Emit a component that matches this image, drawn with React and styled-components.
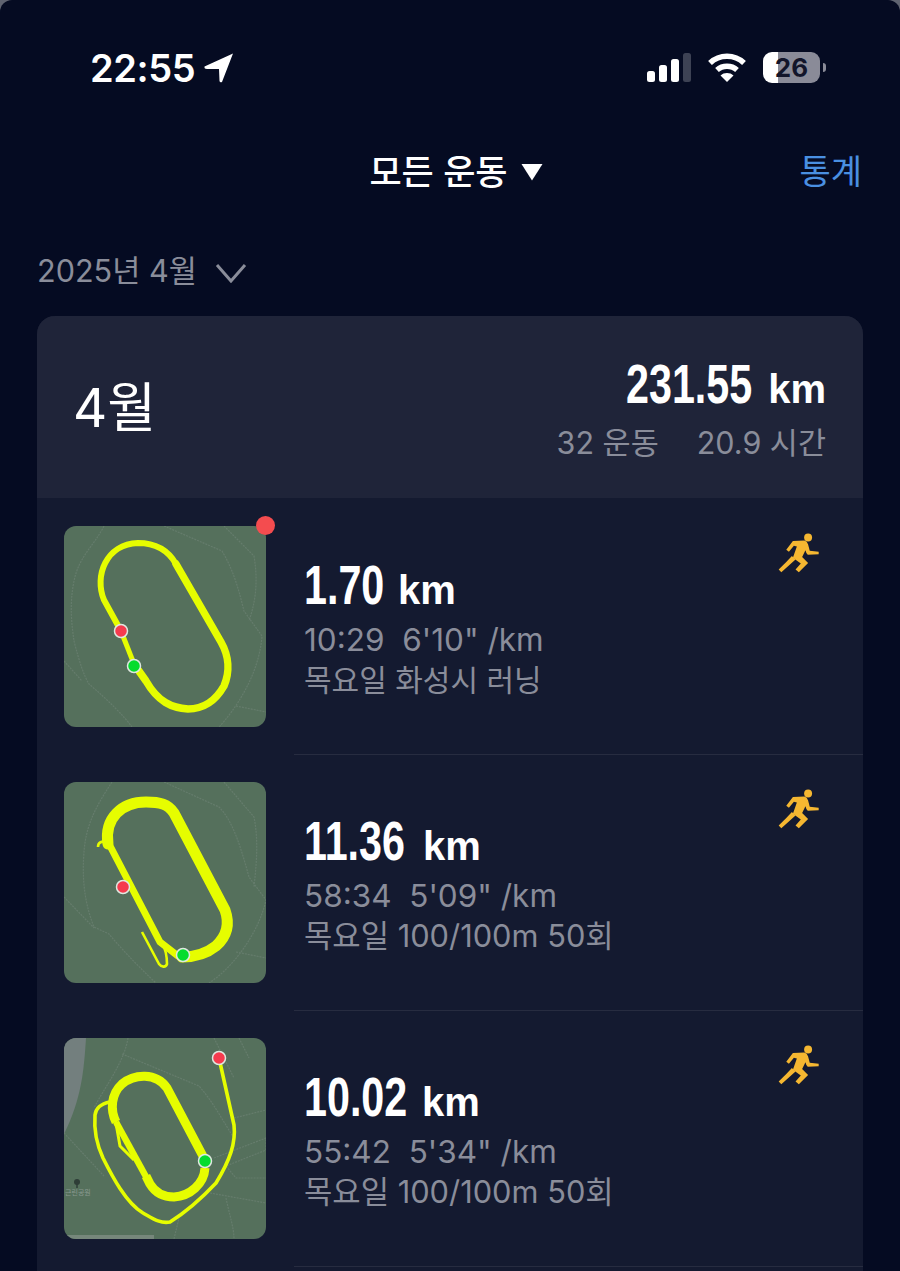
import React from 'react';
import styled, { createGlobalStyle } from 'styled-components';

const GlobalStyle = createGlobalStyle`
  html, body {
    margin: 0;
    padding: 0;
    background: #5f6370;
  }
`;

const KR = `Inter, "Noto Sans CJK KR", "Noto Sans", sans-serif`;
const GREY = '#8a8d9a';

const Page = styled.div`
  width: 900px;
  height: 1271px;
  overflow: hidden;
  background: #050b22;
  border-radius: 12px 12px 0 0;
  display: flex;
  flex-direction: column;
  font-family: ${KR};
`;

const StatusBar = styled.div`
  height: 136px;
  box-sizing: border-box;
  padding: 48px 76px 0 90px;
  display: flex;
  justify-content: space-between;
  align-items: flex-start;
`;

const Clock = styled.div`
  display: flex;
  align-items: center;
  gap: 9px;
  color: #fff;
  font: 600 38px/40px Inter, sans-serif;
  letter-spacing: -0.4px;
`;

const StatusIcons = styled.div`
  display: flex;
  align-items: center;
  gap: 17px;
  height: 38px;
`;

const Battery = styled.div`
  position: relative;
  width: 57px;
  height: 31px;
  border-radius: 9px;
  background: linear-gradient(90deg, #fff 0 26%, #8a8b98 26% 100%);
  color: #12152a;
  font: 700 26px/31px Inter, sans-serif;
  text-align: center;
  margin-right: 4px;
  &::after {
    content: '';
    position: absolute;
    right: -6px;
    top: 11px;
    width: 3px;
    height: 9px;
    border-radius: 0 3px 3px 0;
    background: #8a8b98;
  }
`;

const NavBar = styled.div`
  height: 72px;
  position: relative;
  display: flex;
  justify-content: center;
  align-items: center;
  padding-left: 12px;
`;

const NavTitle = styled.div`
  display: flex;
  align-items: center;
  gap: 13px;
  color: #fff;
  font-size: 35px;
  font-weight: 500;
  line-height: 44px;
`;

const StatsLink = styled.a`
  position: absolute;
  right: 38px;
  top: 14px;
  color: #4a90e2;
  font-size: 34px;
  line-height: 44px;
`;

const MonthPicker = styled.div`
  height: 108px;
  box-sizing: border-box;
  padding: 41px 0 0 37px;
  display: flex;
  align-items: flex-start;
  gap: 18px;
  color: ${GREY};
  font-size: 30.6px;
  line-height: 44px;
`;

const Card = styled.div`
  flex: 1;
  margin: 0 37px;
  border-radius: 18px 18px 0 0;
  overflow: hidden;
  background: #141a30;
`;

const CardHeader = styled.div`
  height: 182px;
  box-sizing: border-box;
  padding: 36px 37px 0 36px;
  background: #1f2439;
  display: flex;
  justify-content: space-between;
`;

const MonthName = styled.div`
  color: #fff;
  font-size: 53px;
  line-height: 112px;
`;

const Summary = styled.div`
  display: flex;
  flex-direction: column;
  align-items: flex-end;
  padding-top: 5px;
`;

const Distance = styled.div`
  color: #fff;
  font-family: "Liberation Sans", sans-serif;
  font-weight: 700;
  line-height: 54px;
  display: flex;
  align-items: baseline;
  gap: 15px;
`;

/* no condensed face is installed, so the digits are squeezed to the measured width */
const Figure = styled.span`
  display: inline-block;
  width: ${p => p.$width}px;
  font-size: 55px;
  white-space: nowrap;
  transform: scaleX(0.75);
  transform-origin: left center;
`;

const Unit = styled.span`
  font-size: 40px;
`;

const Totals = styled.div`
  display: flex;
  gap: 38px;
  color: ${GREY};
  font-size: 30.5px;
  line-height: 44px;
  margin-top: 5px;
`;

const Row = styled.div`
  height: 256px;
  position: relative;
  box-sizing: border-box;
  padding: 28px 42px 0 27px;
  display: flex;
  align-items: flex-start;
  &::after {
    content: '';
    position: absolute;
    left: 257px;
    right: 0;
    bottom: -1px;
    height: 1px;
    background: #272c40;
  }
`;

const Thumb = styled.div`
  position: relative;
  width: 202px;
  height: 201px;
  flex: none;
  border-radius: 12px;
  background: #55705c;
  svg {
    display: block;
    border-radius: 12px;
  }
`;

const NewBadge = styled.span`
  position: absolute;
  top: -10px;
  right: -9px;
  width: 19px;
  height: 19px;
  border-radius: 50%;
  background: #f44c4f;
`;

const Info = styled.div`
  flex: 1;
  margin-left: 38px;
  padding-top: 32px;
`;

const Pace = styled.div`
  color: ${GREY};
  font-size: 31.5px;
  line-height: 40px;
  margin-top: 3px;
  white-space: pre;
`;

const Label = styled.div`
  color: ${GREY};
  font-size: ${p => p.$size}px;
  line-height: 40px;
  white-space: pre;
`;

const RunBox = styled.div`
  padding-top: 7px;
`;

const MapLabel = styled.text`
  font-family: "Noto Sans CJK KR", sans-serif;
  font-size: 7px;
  fill: #8a9a90;
`;

function LocationArrow() {
  return (
    <svg width="30" height="30" viewBox="0 0 30 30">
      <path d="M29 0.5 L0.5 13.5 Q0 16 3 16 L15 16 L15.5 28 Q16 30 18 29 Z" fill="#fff" />
    </svg>
  );
}

function Signal() {
  return (
    <svg width="44" height="29" viewBox="0 0 44 29">
      <rect x="0" y="18" width="8" height="11" rx="2.5" fill="#fff" />
      <rect x="12" y="12" width="8" height="17" rx="2.5" fill="#fff" />
      <rect x="24" y="6" width="8" height="23" rx="2.5" fill="#fff" />
      <rect x="36" y="0" width="8" height="29" rx="2.5" fill="#3d4254" />
    </svg>
  );
}

function Wifi() {
  return (
    <svg width="38" height="29" viewBox="0 0 38 29" fill="none" stroke="#fff" strokeWidth="5.5">
      <path d="M2 10 C11.5 1 26.5 1 36 10" />
      <path d="M9 17 C14.5 12 23.5 12 29 17" />
      <path d="M19 29 L12.5 22.5 C16 19.2 22 19.2 25.5 22.5 Z" fill="#fff" stroke="none" />
    </svg>
  );
}

function Caret() {
  return (
    <svg width="22" height="18" viewBox="0 0 22 18">
      <path d="M0.5 1 L21.5 1 L11 17.5 Z" fill="#fff" />
    </svg>
  );
}

function Chevron() {
  return (
    <svg width="32" height="20" viewBox="0 0 32 20" fill="none" stroke={GREY} strokeWidth="3" style={{ marginTop: 14 }}>
      <path d="M2 2 L16 18 L30 2" />
    </svg>
  );
}

function Runner() {
  return (
    <svg width="43" height="40" viewBox="55 38 130 120" fill="#f5b731">
      <circle cx="146" cy="51" r="12" />
      <path d="M80 88 L100 62 L135 60 Q143 62 146 72 L151 91 L178 94 L178 102 L145 103 Q140 100 138 90 L128 110 L146 128 L118 156 L108 148 L124 130 L100 112 L112 78 L103 76 L88 94 Z" />
      <path d="M97 107 L108 118 L92 132 L65 156 L57 148 L80 125 Z" />
    </svg>
  );
}

const Roads = ({ d }) => (
  <path d={d} fill="none" stroke="#72877a" strokeWidth="1.2" strokeDasharray="2 1" opacity="0.55" />
);

const Marker = ({ x, y, color }) => (
  <circle cx={x} cy={y} r="6.5" fill={color} stroke="#dfe8e0" strokeWidth="1.5" />
);

const ROUTE = '#e6fd00';

function MapOne() {
  return (
    <svg width="202" height="201" viewBox="0 0 202 201" fill="none">
      <Roads d="M40 0 C30 20 15 30 10 55 C5 80 8 100 10 115 C15 135 20 150 25 158 C45 175 60 190 68 201 M0 135 L18 155 M100 0 L158 25 C170 45 175 65 180 85 L198 110 C195 150 170 185 155 201 M160 0 L190 30 C195 60 190 80 185 95 M172 180 L202 186" />
      <path d="M57 105 L40 74 C30 50 42 18 74 17 C92 17 104 24 112 38" stroke={ROUTE} strokeWidth="6" strokeLinecap="round" />
      <path d="M112 38 L157 116 C165 130 166 146 160 160 C152 174 140 183 124 183 C108 182 94 176 82 155 L70 138" stroke={ROUTE} strokeWidth="7.5" strokeLinecap="round" strokeLinejoin="round" />
      <path d="M70 138 L57 105" stroke={ROUTE} strokeWidth="5" />
      <Marker x={57} y={105} color="#f53b4e" />
      <Marker x={70} y={140} color="#05dc2e" />
    </svg>
  );
}

function MapTwo() {
  return (
    <svg width="202" height="201" viewBox="0 0 202 201" fill="none">
      <Roads d="M48 0 C35 20 22 40 20 70 C18 95 20 120 30 145 L45 152 C60 170 80 190 92 201 M0 115 L30 146 M100 0 L155 25 C170 40 178 70 185 95 L202 118 C195 150 170 185 145 201 M160 0 L190 35 C195 60 192 85 190 105 M172 170 L202 176" />
      <path d="M44 62 C40 36 58 20 82 20 C96 20 104 22 110 31 L161 128 C166 142 163 154 152 164 C142 172 130 175 118 175" stroke={ROUTE} strokeWidth="11" strokeLinecap="round" strokeLinejoin="round" />
      <path d="M44 60 L96 160 L114 174" stroke={ROUTE} strokeWidth="7" strokeLinecap="round" />
      <path d="M34 65 C34 60 38 59 42 60 M78 150 L95 182 C98 186 102 185 103 182 C103 175 102 168 98 160" stroke={ROUTE} strokeWidth="2.6" strokeLinejoin="round" />
      <Marker x={59} y={105} color="#f53b4e" />
      <Marker x={119} y={173} color="#05dc2e" />
    </svg>
  );
}

function MapThree() {
  return (
    <svg width="202" height="201" viewBox="0 0 202 201" fill="none">
      <path d="M0 0 L22 0 C20 30 18 60 0 96 Z" fill="#737f7e" />
      <path d="M0 197 L90 197 L90 201 L0 201 Z" fill="#76877b" />
      <Roads d="M64 0 C60 25 40 50 30 70 M58 16 L135 48 C150 65 160 85 170 100 M175 0 L185 20 M150 0 L170 40 M0 95 L40 138 M146 155 L202 165 M170 80 L202 72 M150 120 L202 100 L202 112 L162 128 L172 140 L202 140 M162 160 C165 175 170 190 170 201 M110 201 L115 180" />
      <path d="M155 20 L170 87 C172 105 166 122 152 145 C136 162 122 174 106 184 C96 186 88 180 79 175 C62 165 48 138 39 120 C32 105 30 90 31 77 C32 70 36 66 46 64" stroke={ROUTE} strokeWidth="3.6" strokeLinejoin="round" />
      <path d="M50 74 L56 108 L70 122" stroke={ROUTE} strokeWidth="3" />
      <path d="M141 122 L103 50 C92 34 70 36 58 46 C47 56 46 72 52 84" stroke={ROUTE} strokeWidth="9" strokeLinejoin="round" />
      <path d="M52 84 L86 146" stroke={ROUTE} strokeWidth="6.5" />
      <path d="M82 138 L86 146 C92 156 100 159 110 159 C126 158 140 146 141 130" stroke={ROUTE} strokeWidth="9" />
      <circle cx="13" cy="144" r="3" fill="#2e3d37" />
      <path d="M13 146 L13 150" stroke="#2e3d37" strokeWidth="1.5" />
      <MapLabel x="1" y="157">근린공원</MapLabel>
      <Marker x={155} y={20} color="#f53b4e" />
      <Marker x={141} y={123} color="#05dc2e" />
    </svg>
  );
}

const runs = [
  { km: '1.70', width: 79, meta: `10:29  6'10" /km`, label: '목요일 화성시 러닝', labelSize: 30, Map: MapOne, isNew: true },
  { km: '11.36', width: 104, meta: `58:34  5'09" /km`, label: '목요일 100/100m 50회', labelSize: 30.8, Map: MapTwo },
  { km: '10.02', width: 103, meta: `55:42  5'34" /km`, label: '목요일 100/100m 50회', labelSize: 30.8, Map: MapThree },
];

export default function App() {
  return (
    <Page>
      <GlobalStyle />
      <StatusBar>
        <Clock>
          22:55
          <LocationArrow />
        </Clock>
        <StatusIcons>
          <Signal />
          <Wifi />
          <Battery>26</Battery>
        </StatusIcons>
      </StatusBar>
      <NavBar>
        <NavTitle>
          모든 운동
          <Caret />
        </NavTitle>
        <StatsLink>통계</StatsLink>
      </NavBar>
      <MonthPicker>
        2025년 4월
        <Chevron />
      </MonthPicker>
      <Card>
        <CardHeader>
          <MonthName>4월</MonthName>
          <Summary>
            <Distance>
              <Figure $width={127}>231.55</Figure>
              <Unit>km</Unit>
            </Distance>
            <Totals>
              <span>32 운동</span>
              <span>20.9 시간</span>
            </Totals>
          </Summary>
        </CardHeader>
        {runs.map(run => (
          <Row key={run.km}>
            <Thumb>
              <run.Map />
              {run.isNew && <NewBadge />}
            </Thumb>
            <Info>
              <Distance>
                <Figure $width={run.width}>{run.km}</Figure>
                <Unit>km</Unit>
              </Distance>
              <Pace>{run.meta}</Pace>
              <Label $size={run.labelSize}>{run.label}</Label>
            </Info>
            <RunBox>
              <Runner />
            </RunBox>
          </Row>
        ))}
      </Card>
    </Page>
  );
}
